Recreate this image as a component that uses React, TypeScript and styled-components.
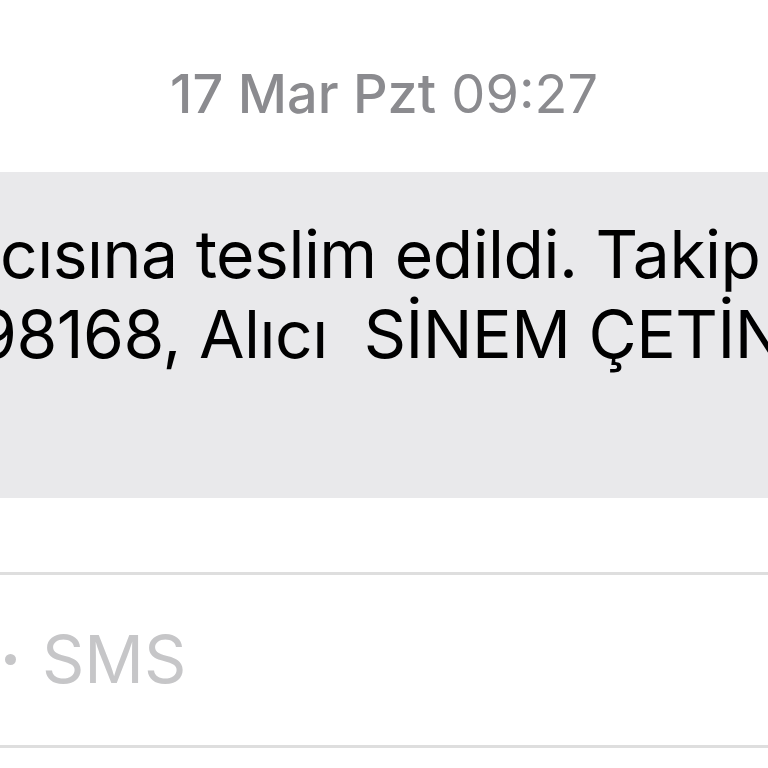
import React from "react";
import styled, { createGlobalStyle } from "styled-components";

const Global = createGlobalStyle`
  html, body { margin: 0; padding: 0; background: #ffffff; }
  body { width: 768px; height: 768px; overflow: hidden; font-family: Inter, "Noto Sans", "Liberation Sans", sans-serif; }
`;

const Screen = styled.div`
  width: 768px;
  height: 768px;
  overflow: hidden;
  display: flex;
  flex-direction: column;
  background: #ffffff;
`;

const Stamp = styled.div`
  padding-top: 62px;
  text-align: center;
  font-size: 54px;
  line-height: 64px;
  color: #8b8b8f;
  white-space: nowrap;
`;

const StampDay = styled.span`
  font-weight: 500;
`;

const StampTime = styled.span`
  font-weight: 400;
`;

const Bubble = styled.div`
  margin-top: 46px;
  background: #e9e9eb;
  padding: 42px 0 44px;
  display: flex;
  flex-direction: column;
`;

const Line = styled.div<{ $shift: number }>`
  font-size: 66px;
  line-height: 80px;
  letter-spacing: -0.5px;
  color: #000000;
  white-space: pre;
  margin-left: ${(p) => p.$shift}px;
  min-height: 80px;
`;

const Rule = styled.div`
  height: 3px;
  background: #dedede;
`;

const Composer = styled.div`
  margin-top: 74px;
  display: flex;
  flex-direction: column;
`;

const Field = styled.div`
  padding: 44px 0 46px;
  display: flex;
  align-items: center;
  gap: 26px;
  font-size: 66px;
  line-height: 80px;
  color: #c6c6c8;
  white-space: nowrap;
`;

const Dot = styled.span`
  width: 11px;
  height: 11px;
  border-radius: 50%;
  background: #c6c6c8;
  margin-left: 5px;
  flex: none;
`;

export default function App() {
  return (
    <Screen>
      <Global />
      <Stamp>
        <StampDay>17 Mar Pzt</StampDay> <StampTime>09:27</StampTime>
      </Stamp>
      <Bubble>
        <Line $shift={0}>cısına teslim edildi. Takip no</Line>
        <Line $shift={-24}>98168, Alıcı  SİNEM ÇETİN</Line>
        <Line $shift={0}> </Line>
      </Bubble>
      <Composer>
        <Rule />
        <Field>
          <Dot />
          SMS
        </Field>
        <Rule />
      </Composer>
    </Screen>
  );
}
